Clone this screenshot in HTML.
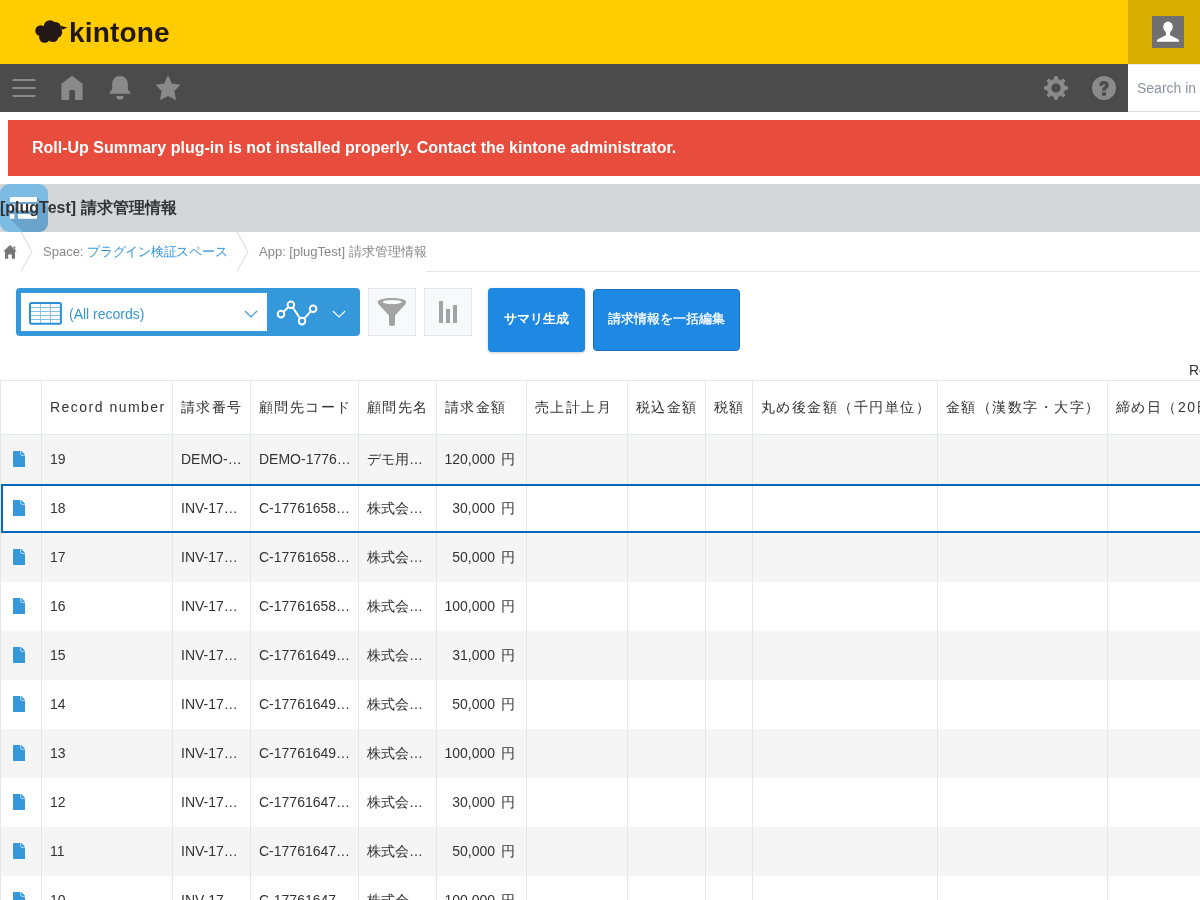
<!DOCTYPE html>
<html><head><meta charset="utf-8">
<style>
*{box-sizing:border-box;margin:0;padding:0}
html,body{width:1200px;height:900px;overflow:hidden;background:#fff;will-change:transform;font-family:"Liberation Sans",sans-serif;color:#333}
.abs{position:absolute}
#hdr{position:absolute;left:0;top:0;width:1200px;height:64px;background:#ffcc00}
#hdr .usr{position:absolute;left:1128px;top:0;width:72px;height:64px;background:#d9ae00}
#hdr .av{position:absolute;left:24px;top:16px;width:32px;height:32px;background:#707070}
#logo{position:absolute;left:69px;top:16.5px;font-weight:bold;font-size:28px;color:#231815;letter-spacing:0.15px}
#nav{position:absolute;left:0;top:64px;width:1200px;height:48px;background:#4b4b4b}
#search{position:absolute;left:1128px;top:64px;width:72px;height:48px;background:#fff;border-top:1px solid #e6eef8;border-bottom:1px solid #d8dcdd}
#search span{position:absolute;left:9px;top:15px;font-size:14px;color:#8a94a0;white-space:nowrap}
#err{position:absolute;left:8px;top:120px;width:1192px;height:56px;background:#e74c3c;color:#fff;font-weight:bold;font-size:16px}
#err span{position:absolute;left:24px;top:19px;white-space:nowrap}
#title{position:absolute;left:0;top:184px;width:1200px;height:48px;background:#d4d7d8}
#title span{position:absolute;left:0;top:14px;font-weight:bold;font-size:16px;color:#333;white-space:nowrap}
#bc{position:absolute;left:0;top:232px;width:1200px;height:40px}
#bc .line{position:absolute;left:426px;top:39px;width:774px;height:1px;background:#e3e7e8}
#bc span{position:absolute;top:11px;font-size:13px;color:#888;white-space:nowrap}
#bc a{color:#3498db;text-decoration:none;letter-spacing:-0.25px}

#tb .vsel{position:absolute;left:16px;top:288px;width:344px;height:48px;background:#3498db;border-radius:4px}
#tb .vsel .inner{position:absolute;left:5px;top:5px;width:246px;height:38px;background:#fff}
#tb .vsel .txt{position:absolute;left:48px;top:12.5px;font-size:14px;color:#3498db;white-space:nowrap}
#tb .ibtn{position:absolute;top:288px;width:48px;height:48px;background:#f7f9fa;border:1px solid #e3e7e8}
#tb .bbtn{position:absolute;top:288px;height:64px;background:#1f88e3;color:#fff;font-size:13px;border-radius:4px;white-space:nowrap;text-align:center}
#rec{position:absolute;left:1189px;top:362px;font-size:14px;color:#333}
.hl{position:absolute;left:0;width:1200px;height:1px;background:#e3e7e8}
.vl{position:absolute;top:380px;width:1px;height:520px;background:#e3e7e8}
.rbg{position:absolute;left:0;width:1200px;height:49px;background:#f5f5f5}
.th{position:absolute;top:381px;height:53px;line-height:53px;font-size:14px;letter-spacing:1.48px;color:#333;white-space:nowrap;overflow:hidden}
.td{position:absolute;height:49px;line-height:49px;font-size:14px;color:#333;white-space:nowrap}
.td.r{text-align:right}.yen{margin-left:2px}
.doc{position:absolute;left:13px;width:12px;height:16px}
.doc svg{display:block}
#sel{position:absolute;left:1px;top:484px;width:1210px;height:49px;border:2px solid #0867b9}
</style></head><body>
<div id="hdr">
  <svg class="abs" style="left:34px;top:19px" width="36" height="26" viewBox="34 19 36 26">
    <g fill="#231815">
      <circle cx="40.8" cy="30.7" r="5.5"/>
      <circle cx="50" cy="26.5" r="6.3"/>
      <circle cx="55.6" cy="27.2" r="5.3"/>
      <circle cx="56.7" cy="32.3" r="5.5"/>
      <circle cx="44.6" cy="37.3" r="5.5"/>
      <circle cx="53" cy="36.5" r="5.5"/>
      <circle cx="48" cy="32" r="7"/>
      <path d="M60.5 25.8 L67.4 27.4 L61.5 30 Z"/>
    </g>
  </svg>
  <div id="logo">kintone</div>
  <div class="usr"><div class="av">
    <svg width="32" height="32" viewBox="0 0 32 32"><g fill="#fff"><ellipse cx="16" cy="10.9" rx="4.8" ry="5.3"/><path d="M13.7 15 L18.3 15 L18.1 19.3 L25.8 23.1 Q27.2 23.9 27.1 25.8 L4.9 25.8 Q4.8 23.9 6.2 23.1 L13.9 19.3 Z"/></g></svg>
  </div></div>
</div>
<div id="nav">
  <!-- hamburger -->
  <svg class="abs" style="left:0;top:0" width="200" height="48" viewBox="0 64 200 48">
    <g stroke="#8a8a8a" stroke-width="2" stroke-linecap="round">
      <line x1="13.3" y1="80" x2="34.7" y2="80"/><line x1="13.3" y1="88" x2="34.7" y2="88"/><line x1="13.3" y1="96" x2="34.7" y2="96"/>
    </g>
    <path fill="#8a8a8a" d="M72 75.8 L82.2 83.6 Q82.6 84 82.6 84.6 L82.6 99 Q82.6 100 81.6 100 L76 100 Q75 100 75 99 L75 91.2 Q75 90 73.8 90 L70.4 90 Q69.2 90 69.2 91.2 L69.2 99 Q69.2 100 68.2 100 L62.4 100 Q61.4 100 61.4 99 L61.4 84.6 Q61.4 84 61.8 83.6 Z"/>
    <path fill="#8a8a8a" d="M120 76.1 C124.5 76.1 127.8 79.5 127.8 84 L127.8 87.5 C127.8 89.5 129 91 130.2 92.3 Q130.8 93 130.4 93.7 L109.6 93.7 Q109.2 93 109.8 92.3 C111 91 112.2 89.5 112.2 87.5 L112.2 84 C112.2 79.5 115.5 76.1 120 76.1 Z M116.4 96.8 Q116.4 96 117.2 96 L122.8 96 Q123.6 96 123.6 96.8 C123.6 98.6 122 99.9 120 99.9 C118 99.9 116.4 98.6 116.4 96.8 Z"/>
    <path fill="#8a8a8a" stroke="#8a8a8a" stroke-width="1.2" stroke-linejoin="round" d="M168 76.6 L171.5 84.2 L179.3 85.2 L173.7 90.8 L175.3 99.3 L168 95.2 L160.7 99.3 L162.3 90.8 L156.7 85.2 L164.5 84.2 Z"/>
  </svg>
  <svg class="abs" style="left:1030px;top:0" width="98" height="48" viewBox="1030 64 98 48">
    <g fill="#8a8a8a">
      <path id="gear" fill-rule="evenodd" stroke="#8a8a8a" stroke-width="0.8" stroke-linejoin="round" d="M1054.10 79.51L1054.50 76.50L1057.50 76.50L1057.90 79.51A8.7 8.7 0 0 1 1060.66 80.65L1063.07 78.81L1065.19 80.93L1063.35 83.34A8.7 8.7 0 0 1 1064.49 86.10L1067.50 86.50L1067.50 89.50L1064.49 89.90A8.7 8.7 0 0 1 1063.35 92.66L1065.19 95.07L1063.07 97.19L1060.66 95.35A8.7 8.7 0 0 1 1057.90 96.49L1057.50 99.50L1054.50 99.50L1054.10 96.49A8.7 8.7 0 0 1 1051.34 95.35L1048.93 97.19L1046.81 95.07L1048.65 92.66A8.7 8.7 0 0 1 1047.51 89.90L1044.50 89.50L1044.50 86.50L1047.51 86.10A8.7 8.7 0 0 1 1048.65 83.34L1046.81 80.93L1048.93 78.81L1051.34 80.65A8.7 8.7 0 0 1 1054.10 79.51ZM1061.05 88A5.05 5.05 0 1 0 1050.95 88A5.05 5.05 0 1 0 1061.05 88Z"/>
      <circle cx="1104" cy="88" r="12"/>
    </g>
    <path d="M1100.9 85.8 C1100.9 83.6 1102.2 82.6 1104 82.6 C1105.9 82.6 1107.1 83.6 1107.1 85.4 C1107.1 87.3 1104 87.7 1104 89.4 L1104 90.7" fill="none" stroke="#4b4b4b" stroke-width="3.4"/><rect x="1102" y="92.3" width="4" height="3.4" fill="#4b4b4b"/>
  </svg>
</div>
<div id="search"><span>Search in</span></div>
<div id="err"><span>Roll-Up Summary plug-in is not installed properly. Contact the kintone administrator.</span></div>
<div id="title">
  <svg class="abs" style="left:0;top:0" width="48" height="48" viewBox="0 0 48 48">
    <defs><clipPath id="ic"><rect x="0" y="0" width="48" height="48" rx="9"/></clipPath></defs>
    <g clip-path="url(#ic)"><rect x="0" y="0" width="48" height="48" fill="#7cbbe4"/>
    <path d="M10 13 L37 13 L72 48 L45 48 L10 35 Z" fill="#6aa3cc"/>
    <path d="M10 35 L37 35 L48 46 L48 48 L23 48 Z" fill="#6aa3cc"/>
    <g fill="#fff"><rect x="10" y="13" width="27" height="5"/><rect x="10" y="20" width="4.5" height="6.5"/><rect x="17.5" y="20" width="19.5" height="6.5"/><rect x="10" y="30" width="4.5" height="4.8"/><rect x="18" y="30" width="19" height="4.8"/></g></g>
  </svg>
  <span>[plugTest] 請求管理情報</span>
</div>
<div id="bc">
  <div class="line"></div>
  <svg class="abs" style="left:0;top:0" width="260" height="40" viewBox="0 232 260 40"><path fill="#777" d="M10 245 L16.8 251.6 L15 251.6 L15 258.8 L11.8 258.8 L11.8 254.5 L8.2 254.5 L8.2 258.8 L5 258.8 L5 251.6 L3.2 251.6 Z M13.3 246.5 L15.3 246.5 L15.3 249.5 L13.3 247.5 Z"/>
  <path d="M21 232 L32 251.8 L21 271.5" fill="none" stroke="#e0e4e5" stroke-width="1.3"/>
  <path d="M237 232 L248 251.8 L237 271.5" fill="none" stroke="#e0e4e5" stroke-width="1.3"/></svg>
  <span style="left:43px">Space: <a>プラグイン検証スペース</a></span>
  <span style="left:259px">App: [plugTest] 請求管理情報</span>
</div>
<div id="tb">
  <div class="vsel">
    <div class="inner">
      <svg class="abs" style="left:8px;top:9px" width="34" height="24" viewBox="0 0 34 24"><g fill="none"><path d="M11.4 1.5V22M21.5 1.5V22M1.5 5.5H31M1.5 9.5H31M1.5 13.5H31M1.5 17.5H31" stroke="#86c0e8" stroke-width="1"/><rect x="1" y="1" width="30.9" height="20.8" rx="1.5" stroke="#2b8fd8" stroke-width="2"/></g></svg>
      <div class="txt">(All records)</div>
      <svg class="abs" style="left:223px;top:17px" width="14" height="8" viewBox="0 0 14 8"><path d="M1 1 L7 7 L13 1" fill="none" stroke="#3498db" stroke-width="1.2"/></svg>
    </div>
    <svg class="abs" style="left:256px;top:0" width="88" height="48" viewBox="272 288 88 48"><g fill="none" stroke="#fff" stroke-width="2"><path d="M283.8 311.5 L288.3 307.3 M293 307.7 L299.6 317.8 M304.6 318.2 L310.5 311.6"/><circle cx="281" cy="314.1" r="3.3"/><circle cx="290.9" cy="304.8" r="3.3"/><circle cx="302" cy="321.1" r="3.3"/><circle cx="313.1" cy="308.7" r="3.3"/></g><path d="M332.8 311 L339 317 L345.2 311" fill="none" stroke="#fff" stroke-width="1.2"/></svg>
  </div>
  <div class="ibtn" style="left:368px">
    <svg class="abs" style="left:-1px;top:-1px" width="48" height="48" viewBox="368 288 48 48"><path fill="#a3a3a3" d="M392 298 C399.5 298 406.2 299.6 406.2 302 C406.2 303.2 405.5 304.2 404.5 305.3 L395 315.5 L395 324 C395 325 394 326 392 326 C390 326 389 325 389 324 L389 315.5 L379.5 305.3 C378.5 304.2 377.8 303.2 377.8 302 C377.8 299.6 384.5 298 392 298 Z"/><ellipse cx="392.2" cy="302" rx="9.6" ry="2.1" fill="#f7f9fa"/></svg>
  </div>
  <div class="ibtn" style="left:424px">
    <svg class="abs" style="left:-1px;top:-1px" width="48" height="48" viewBox="424 288 48 48"><g fill="#a3a3a3"><rect x="439" y="301" width="4" height="22"/><rect x="446" y="309" width="4" height="14"/><rect x="453" y="305" width="4" height="18"/></g></svg>
  </div>
  <div class="bbtn" style="left:488px;width:97px;line-height:62px;font-weight:bold;font-size:13.3px;box-shadow:0 1px 3px rgba(0,0,0,.2)">サマリ生成</div>
  <div class="bbtn" style="left:593px;top:289px;width:147px;height:62px;line-height:58px;border:1px solid #1a6dc0;-webkit-text-stroke:0.3px #fff">請求情報を一括編集</div>
</div>
<div id="rec" style="white-space:nowrap">Records 1 to 19 (19 records)</div>
<div id="tbl">
<div class="hl" style="top:380px"></div>
<div class="hl" style="top:434px"></div>
<div class="rbg" style="top:435px"></div>
<div class="rbg" style="top:533px"></div>
<div class="rbg" style="top:631px"></div>
<div class="rbg" style="top:729px"></div>
<div class="rbg" style="top:827px"></div>
<div class="vl" style="left:0px"></div>
<div class="vl" style="left:41px"></div>
<div class="vl" style="left:172px"></div>
<div class="vl" style="left:250px"></div>
<div class="vl" style="left:358px"></div>
<div class="vl" style="left:436px"></div>
<div class="vl" style="left:526px"></div>
<div class="vl" style="left:627px"></div>
<div class="vl" style="left:705px"></div>
<div class="vl" style="left:752px"></div>
<div class="vl" style="left:937px"></div>
<div class="vl" style="left:1107px"></div>
<div class="th" style="left:50px;width:122px">Record number</div>
<div class="th" style="left:181px;width:69px">請求番号</div>
<div class="th" style="left:259px;width:99px">顧問先コード</div>
<div class="th" style="left:367px;width:69px">顧問先名</div>
<div class="th" style="left:445px;width:81px">請求金額</div>
<div class="th" style="left:535px;width:92px">売上計上月</div>
<div class="th" style="left:636px;width:69px">税込金額</div>
<div class="th" style="left:714px;width:38px">税額</div>
<div class="th" style="left:761px;width:176px">丸め後金額（千円単位）</div>
<div class="th" style="left:946px;width:161px">金額（漢数字・大字）</div>
<div class="th" style="left:1116px;width:184px">締め日（20日締め）</div>
<div class="doc" style="top:451px"><svg width="12" height="16" viewBox="0 0 12 16"><path d="M0 0 H8.3 L12 3.7 V16 H0 Z" fill="#3498db"/><path d="M7.6 0 V2.6 Q7.6 4.5 9.5 4.5 H12" fill="none" stroke="#b3d7f1" stroke-width="1.1"/></svg></div>
<div class="td" style="top:435px;left:50px">19</div>
<div class="td" style="top:435px;left:181px">DEMO-…</div>
<div class="td" style="top:435px;left:259px">DEMO-1776…</div>
<div class="td" style="top:435px;left:367px">デモ用…</div>
<div class="td r" style="top:435px;left:436px;width:79px">120,000 <span class=yen>円</span></div>
<div class="doc" style="top:500px"><svg width="12" height="16" viewBox="0 0 12 16"><path d="M0 0 H8.3 L12 3.7 V16 H0 Z" fill="#3498db"/><path d="M7.6 0 V2.6 Q7.6 4.5 9.5 4.5 H12" fill="none" stroke="#b3d7f1" stroke-width="1.1"/></svg></div>
<div class="td" style="top:484px;left:50px">18</div>
<div class="td" style="top:484px;left:181px">INV-17…</div>
<div class="td" style="top:484px;left:259px">C-17761658…</div>
<div class="td" style="top:484px;left:367px">株式会…</div>
<div class="td r" style="top:484px;left:436px;width:79px">30,000 <span class=yen>円</span></div>
<div class="doc" style="top:549px"><svg width="12" height="16" viewBox="0 0 12 16"><path d="M0 0 H8.3 L12 3.7 V16 H0 Z" fill="#3498db"/><path d="M7.6 0 V2.6 Q7.6 4.5 9.5 4.5 H12" fill="none" stroke="#b3d7f1" stroke-width="1.1"/></svg></div>
<div class="td" style="top:533px;left:50px">17</div>
<div class="td" style="top:533px;left:181px">INV-17…</div>
<div class="td" style="top:533px;left:259px">C-17761658…</div>
<div class="td" style="top:533px;left:367px">株式会…</div>
<div class="td r" style="top:533px;left:436px;width:79px">50,000 <span class=yen>円</span></div>
<div class="doc" style="top:598px"><svg width="12" height="16" viewBox="0 0 12 16"><path d="M0 0 H8.3 L12 3.7 V16 H0 Z" fill="#3498db"/><path d="M7.6 0 V2.6 Q7.6 4.5 9.5 4.5 H12" fill="none" stroke="#b3d7f1" stroke-width="1.1"/></svg></div>
<div class="td" style="top:582px;left:50px">16</div>
<div class="td" style="top:582px;left:181px">INV-17…</div>
<div class="td" style="top:582px;left:259px">C-17761658…</div>
<div class="td" style="top:582px;left:367px">株式会…</div>
<div class="td r" style="top:582px;left:436px;width:79px">100,000 <span class=yen>円</span></div>
<div class="doc" style="top:647px"><svg width="12" height="16" viewBox="0 0 12 16"><path d="M0 0 H8.3 L12 3.7 V16 H0 Z" fill="#3498db"/><path d="M7.6 0 V2.6 Q7.6 4.5 9.5 4.5 H12" fill="none" stroke="#b3d7f1" stroke-width="1.1"/></svg></div>
<div class="td" style="top:631px;left:50px">15</div>
<div class="td" style="top:631px;left:181px">INV-17…</div>
<div class="td" style="top:631px;left:259px">C-17761649…</div>
<div class="td" style="top:631px;left:367px">株式会…</div>
<div class="td r" style="top:631px;left:436px;width:79px">31,000 <span class=yen>円</span></div>
<div class="doc" style="top:696px"><svg width="12" height="16" viewBox="0 0 12 16"><path d="M0 0 H8.3 L12 3.7 V16 H0 Z" fill="#3498db"/><path d="M7.6 0 V2.6 Q7.6 4.5 9.5 4.5 H12" fill="none" stroke="#b3d7f1" stroke-width="1.1"/></svg></div>
<div class="td" style="top:680px;left:50px">14</div>
<div class="td" style="top:680px;left:181px">INV-17…</div>
<div class="td" style="top:680px;left:259px">C-17761649…</div>
<div class="td" style="top:680px;left:367px">株式会…</div>
<div class="td r" style="top:680px;left:436px;width:79px">50,000 <span class=yen>円</span></div>
<div class="doc" style="top:745px"><svg width="12" height="16" viewBox="0 0 12 16"><path d="M0 0 H8.3 L12 3.7 V16 H0 Z" fill="#3498db"/><path d="M7.6 0 V2.6 Q7.6 4.5 9.5 4.5 H12" fill="none" stroke="#b3d7f1" stroke-width="1.1"/></svg></div>
<div class="td" style="top:729px;left:50px">13</div>
<div class="td" style="top:729px;left:181px">INV-17…</div>
<div class="td" style="top:729px;left:259px">C-17761649…</div>
<div class="td" style="top:729px;left:367px">株式会…</div>
<div class="td r" style="top:729px;left:436px;width:79px">100,000 <span class=yen>円</span></div>
<div class="doc" style="top:794px"><svg width="12" height="16" viewBox="0 0 12 16"><path d="M0 0 H8.3 L12 3.7 V16 H0 Z" fill="#3498db"/><path d="M7.6 0 V2.6 Q7.6 4.5 9.5 4.5 H12" fill="none" stroke="#b3d7f1" stroke-width="1.1"/></svg></div>
<div class="td" style="top:778px;left:50px">12</div>
<div class="td" style="top:778px;left:181px">INV-17…</div>
<div class="td" style="top:778px;left:259px">C-17761647…</div>
<div class="td" style="top:778px;left:367px">株式会…</div>
<div class="td r" style="top:778px;left:436px;width:79px">30,000 <span class=yen>円</span></div>
<div class="doc" style="top:843px"><svg width="12" height="16" viewBox="0 0 12 16"><path d="M0 0 H8.3 L12 3.7 V16 H0 Z" fill="#3498db"/><path d="M7.6 0 V2.6 Q7.6 4.5 9.5 4.5 H12" fill="none" stroke="#b3d7f1" stroke-width="1.1"/></svg></div>
<div class="td" style="top:827px;left:50px">11</div>
<div class="td" style="top:827px;left:181px">INV-17…</div>
<div class="td" style="top:827px;left:259px">C-17761647…</div>
<div class="td" style="top:827px;left:367px">株式会…</div>
<div class="td r" style="top:827px;left:436px;width:79px">50,000 <span class=yen>円</span></div>
<div class="doc" style="top:892px"><svg width="12" height="16" viewBox="0 0 12 16"><path d="M0 0 H8.3 L12 3.7 V16 H0 Z" fill="#3498db"/><path d="M7.6 0 V2.6 Q7.6 4.5 9.5 4.5 H12" fill="none" stroke="#b3d7f1" stroke-width="1.1"/></svg></div>
<div class="td" style="top:876px;left:50px">10</div>
<div class="td" style="top:876px;left:181px">INV-17…</div>
<div class="td" style="top:876px;left:259px">C-17761647…</div>
<div class="td" style="top:876px;left:367px">株式会…</div>
<div class="td r" style="top:876px;left:436px;width:79px">100,000 <span class=yen>円</span></div>
<div id="sel"></div>
</div>
</body></html>
